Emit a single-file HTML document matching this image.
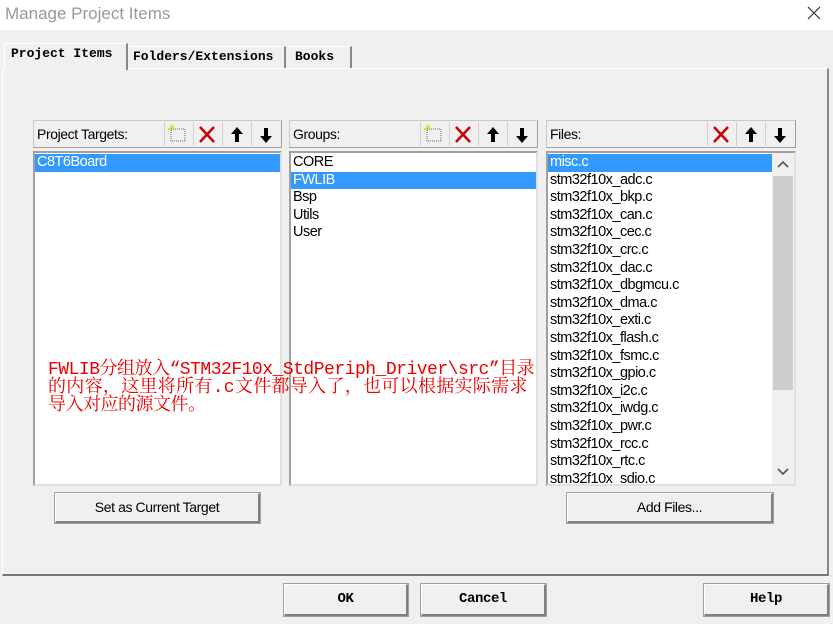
<!DOCTYPE html>
<html><head><meta charset="utf-8"><style>
*{box-sizing:border-box;margin:0;padding:0}
body{width:833px;height:624px;background:#f0f0f0;position:relative;overflow:hidden;font-family:"Liberation Sans",sans-serif}
.a{position:absolute}
.title{left:0;top:0;width:833px;height:30px;background:#fff}
.tab{font-family:"Liberation Mono",monospace;font-weight:bold;font-size:13px;color:#000}
.hdr{background:#f0f0f0;border:1px solid #c8c8c8;border-right-color:#a0a0a0;border-bottom-color:#a0a0a0;font-size:14px;letter-spacing:-0.4px}
.hdr span{position:absolute;left:3px;top:5px}
.ib{position:absolute;top:1px;width:28px;height:26px;border-left:1px solid #d0d0d0}
.list{background:#fff;border:2px solid #a0a0a0;border-right-color:#e0e0e0;border-bottom-color:#e0e0e0;font-size:14.5px;letter-spacing:-0.5px;line-height:17.6px;padding-top:1px}
.list div{padding-left:2px;height:17.6px}
.sel{background:#3399ff;color:#fff}
.btn{background:#f0f0f0;border:1px solid #fff;border-right:2px solid #808080;border-bottom:2px solid #808080;outline:1px solid #a0a0a0;text-align:center;font-size:14px;letter-spacing:-0.4px}
.mb{font-family:"Liberation Mono",monospace;font-weight:bold;font-size:14px}
.red{color:#e00;font-family:"Liberation Mono","Noto Serif CJK SC",monospace;font-size:18px;line-height:18px;letter-spacing:-0.5px;white-space:nowrap}
</style></head><body>
<div class="a title"></div>
<div class="a" style="left:5px;top:4px;font-size:17px;color:#999">Manage Project Items</div>
<svg class="a" style="left:806px;top:5px" width="16" height="16"><path d="M2 2L14 14M14 2L2 14" stroke="#333" stroke-width="1.2"/></svg>
<div class="a" style="left:2px;top:68px;width:827px;height:508px;border:1px solid #fff;border-right:2px solid #888;border-bottom:2px solid #777"></div>
<div class="a" style="left:4px;top:43px;width:124px;height:27px;background:#f0f0f0;border:1px solid #fff;border-bottom:none;border-right:2px solid #888"></div>
<div class="a tab" style="left:11px;top:46px">Project Items</div>
<div class="a" style="left:129px;top:46px;width:157px;height:22px;border-right:2px solid #888;border-top:1px solid #fff"></div>
<div class="a tab" style="left:133px;top:49px">Folders/Extensions</div>
<div class="a" style="left:288px;top:46px;width:64px;height:22px;border-right:2px solid #888;border-top:1px solid #fff"></div>
<div class="a tab" style="left:295px;top:49px">Books</div>

<div class="a hdr" style="left:33px;top:120px;width:249px;height:28px"><span>Project Targets:</span>
<div class="ib" style="left:130px"><svg width="28" height="26"><rect x="6" y="7" width="14" height="12" fill="none" stroke="#666" stroke-dasharray="1 1"/><path d="M5 4l3 3M8 3v3M3 7h3" stroke="#dd0" stroke-width="1.5"/></svg></div>
<div class="ib" style="left:159px"><svg width="28" height="26"><path d="M6 5L20 20M20 5L6 20" stroke="#c00" stroke-width="2.5"/></svg></div>
<div class="ib" style="left:188px"><svg width="28" height="26"><path d="M14 5L8 12H12V20H16V12H20Z" fill="#000"/></svg></div>
<div class="ib" style="left:217px"><svg width="28" height="26"><path d="M14 21L8 14H12V6H16V14H20Z" fill="#000"/></svg></div></div>
<div class="a hdr" style="left:289px;top:120px;width:249px;height:28px"><span>Groups:</span>
<div class="ib" style="left:130px"><svg width="28" height="26"><rect x="6" y="7" width="14" height="12" fill="none" stroke="#666" stroke-dasharray="1 1"/><path d="M5 4l3 3M8 3v3M3 7h3" stroke="#dd0" stroke-width="1.5"/></svg></div>
<div class="ib" style="left:159px"><svg width="28" height="26"><path d="M6 5L20 20M20 5L6 20" stroke="#c00" stroke-width="2.5"/></svg></div>
<div class="ib" style="left:188px"><svg width="28" height="26"><path d="M14 5L8 12H12V20H16V12H20Z" fill="#000"/></svg></div>
<div class="ib" style="left:217px"><svg width="28" height="26"><path d="M14 21L8 14H12V6H16V14H20Z" fill="#000"/></svg></div></div>
<div class="a hdr" style="left:546px;top:120px;width:250px;height:28px"><span>Files:</span>
<div class="ib" style="left:160px"><svg width="28" height="26"><path d="M6 5L20 20M20 5L6 20" stroke="#c00" stroke-width="2.5"/></svg></div>
<div class="ib" style="left:189px"><svg width="28" height="26"><path d="M14 5L8 12H12V20H16V12H20Z" fill="#000"/></svg></div>
<div class="ib" style="left:218px"><svg width="28" height="26"><path d="M14 21L8 14H12V6H16V14H20Z" fill="#000"/></svg></div></div>

<div class="a list" style="left:33px;top:151px;width:249px;height:335px"><div class="sel">C8T6Board</div></div>
<div class="a list" style="left:289px;top:151px;width:249px;height:335px"><div>CORE</div><div class="sel">FWLIB</div><div>Bsp</div><div>Utils</div><div>User</div></div>
<div class="a list" style="left:546px;top:151px;width:250px;height:335px;overflow:hidden">
<div class="sel" style="width:224px">misc.c</div><div>stm32f10x_adc.c</div><div>stm32f10x_bkp.c</div><div>stm32f10x_can.c</div><div>stm32f10x_cec.c</div><div>stm32f10x_crc.c</div><div>stm32f10x_dac.c</div><div>stm32f10x_dbgmcu.c</div><div>stm32f10x_dma.c</div><div>stm32f10x_exti.c</div><div>stm32f10x_flash.c</div><div>stm32f10x_fsmc.c</div><div>stm32f10x_gpio.c</div><div>stm32f10x_i2c.c</div><div>stm32f10x_iwdg.c</div><div>stm32f10x_pwr.c</div><div>stm32f10x_rcc.c</div><div>stm32f10x_rtc.c</div><div>stm32f10x_sdio.c</div></div>
<div class="a" style="left:772px;top:153px;width:22px;height:331px;background:#f0f0f0"></div>
<div class="a" style="left:773px;top:176px;width:20px;height:214px;background:#cdcdcd"></div>
<svg class="a" style="left:776px;top:159px" width="14" height="12"><path d="M2 8L7 3L12 8" fill="none" stroke="#555" stroke-width="1.6"/></svg>
<svg class="a" style="left:776px;top:466px" width="14" height="12"><path d="M2 3L7 8L12 3" fill="none" stroke="#555" stroke-width="1.6"/></svg>

<div class="a red" style="left:48px;top:361px">FWLIB分组放入“STM32F10x_StdPeriph_Driver\src”目录<br><span style="letter-spacing:0.3px">的内容，这里将所有.c文件都导入了，也可以根据实际需求</span><br>导入对应的源文件。</div>

<div class="a btn" style="left:55px;top:493px;width:205px;height:30px;line-height:27px">Set as Current Target</div>
<div class="a btn" style="left:567px;top:493px;width:206px;height:30px;line-height:27px">Add Files...</div>
<div class="a btn mb" style="left:284px;top:584px;width:124px;height:32px;line-height:29px">OK</div>
<div class="a btn mb" style="left:421px;top:584px;width:125px;height:32px;line-height:29px">Cancel</div>
<div class="a btn mb" style="left:704px;top:584px;width:125px;height:32px;line-height:29px">Help</div>
</body></html>
